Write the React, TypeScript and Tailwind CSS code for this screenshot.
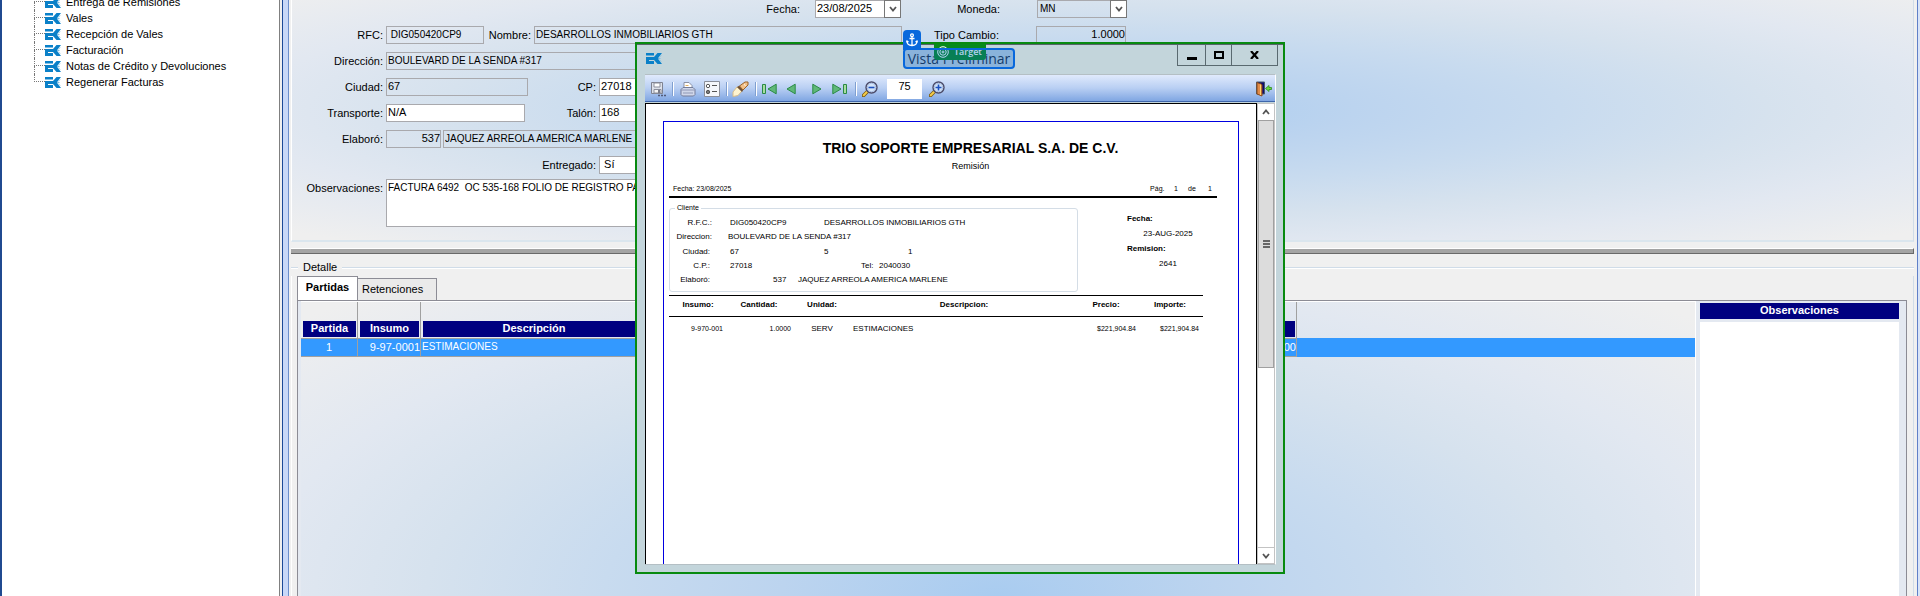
import React from "react";

const treeItems = [
  "Entrega de Remisiones",
  "Vales",
  "Recepción de Vales",
  "Facturación",
  "Notas de Crédito y Devoluciones",
  "Regenerar Facturas",
];

function EkLogo() {
  return (
    <svg width="16" height="11" viewBox="0 0 16 11" className="shrink-0" aria-hidden="true">
      <path d="M0 0h8v2.500H0zM0 4h8L11.500 0H16l-3.500 4.500v2L16 11h-4.500L8 7H3v1h5v3H0z" fill="#0a80c8" />
      <path d="M13 4.500L15 2.500M13 6.500l2 2M13 5.500h1.500" stroke="#7dc0e6" />
    </svg>
  );
}

function Chevron({ up = false }: { up?: boolean }) {
  return (
    <svg width="8" height="6" viewBox="0 0 8 6" aria-hidden="true">
      <path d={up ? "M1 5l3-3.500L7 5" : "M1 1l3 3.500L7 1"} fill="none" stroke="#555" strokeWidth="1.800" />
    </svg>
  );
}

function Label({ id, text, className }: { id: string; text: string; className: string }) {
  return (
    <label htmlFor={id} className={"shrink-0 pr-[3px] pb-px text-right whitespace-nowrap " + className}>
      {text}
    </label>
  );
}

function Field({ id, value, className }: { id: string; value: string; className: string }) {
  return (
    <input
      id={id}
      defaultValue={value}
      className={"h-[18px] shrink-0 rounded-none border border-[#a9a9ad] pb-[2px] pl-px outline-none " + className}
    />
  );
}

function Sidebar() {
  return (
    <nav className="flex w-[280px] shrink-0 flex-col border-r border-l-2 border-r-[#808080] border-l-[#204a90] bg-white pl-8">
      <ul className="-mt-[6px]">
        {treeItems.map((t, i) => (
          <li key={t} className="flex h-4 items-center">
            <span className="flex h-full w-[11px] flex-col">
              <span className="h-2 w-full border-b border-l border-dotted border-[#777]" />
              {i < treeItems.length - 1 && <span className="h-2 border-l border-dotted border-[#777]" />}
            </span>
            <EkLogo />
            <a href="#" className="pl-[5px] whitespace-nowrap">
              {t}
            </a>
          </li>
        ))}
      </ul>
    </nav>
  );
}

function Form() {
  return (
    <form className="flex h-[242px] shrink-0 flex-col gap-2 border-r border-b-2 border-l border-r-[#d0dce8] border-b-[#dbe6ee] border-l-white bg-[radial-gradient(ellipse_farthest-corner_at_50%_46%,#a9ccf0_0%,#bcd4ef_22%,#c8dbef_40%,#d6e2ee_58%,#e2e8f1_75%,#efefef_97%)]">
      <div className="flex h-[18px] items-center">
        <Label id="fecha" text="Fecha:" className="w-[511px]" />
        <div className="ml-[12px] flex">
          <Field id="fecha" value="23/08/2025" className="w-[69px] border-r-0 bg-white text-[11px]" />
          <button type="button" aria-label="Calendario" className="flex h-[18px] w-[17px] items-center justify-center border border-[#777] bg-white">
            <Chevron />
          </button>
        </div>
        <Label id="moneda" text="Moneda:" className="w-[102px]" />
        <div className="relative ml-[34px]">
          <select id="moneda" className="block h-[18px] w-[90px] appearance-none rounded-none border border-[#a9a9ad] bg-transparent pb-[2px] pl-[2px] text-[10px] outline-none">
            <option>MN</option>
          </select>
          <span className="pointer-events-none absolute top-0 right-0 flex h-[18px] w-[17px] items-center justify-center border border-[#777] bg-white">
            <Chevron />
          </span>
        </div>
      </div>
      <div className="flex h-[18px] items-center">
        <Label id="rfc" text="RFC:" className="w-[94px]" />
        <Field id="rfc" value=" DIG050420CP9" className="w-[98px] bg-transparent text-[10px]" />
        <Label id="nombre" text="Nombre:" className="w-[50px]" />
        <Field id="nombre" value="DESARROLLOS INMOBILIARIOS GTH" className="w-[368px] bg-transparent text-[10px]" />
        <Label id="cambio" text="Tipo Cambio:" className="w-[100px]" />
        <Field id="cambio" value="1.0000" className="ml-[34px] w-[90px] bg-transparent text-right text-[11px]" />
      </div>
      <div className="flex h-[18px] items-center">
        <Label id="direccion" text="Dirección:" className="w-[94px]" />
        <Field id="direccion" value="BOULEVARD DE LA SENDA #317" className="w-[516px] bg-transparent text-[10px]" />
      </div>
      <div className="flex h-[18px] items-center">
        <Label id="ciudad" text="Ciudad:" className="w-[94px]" />
        <Field id="ciudad" value="67" className="w-[142px] bg-transparent text-[11px]" />
        <Label id="cp" text="CP:" className="w-[71px]" />
        <Field id="cp" value="27018" className="w-[100px] bg-white text-[11px]" />
      </div>
      <div className="flex h-[18px] items-center">
        <Label id="transporte" text="Transporte:" className="w-[94px]" />
        <Field id="transporte" value="N/A" className="w-[139px] bg-white text-[11px]" />
        <Label id="talon" text="Talón:" className="w-[74px]" />
        <Field id="talon" value="168" className="w-[100px] bg-white text-[11px]" />
      </div>
      <div className="flex h-[18px] items-center">
        <Label id="elaboro" text="Elaboró:" className="w-[94px]" />
        <Field id="elaboro" value="537" className="mr-[2px] w-[55px] bg-transparent text-right text-[11px]" />
        <input
          aria-label="Nombre de quien elaboró"
          defaultValue="JAQUEZ ARREOLA AMERICA MARLENE"
          className="h-[18px] w-[459px] rounded-none border border-[#a9a9ad] bg-transparent pb-[2px] pl-px text-[10px] outline-none"
        />
      </div>
      <div className="flex h-[18px] items-center">
        <Label id="entregado" text="Entregado:" className="w-[307px]" />
        <Field id="entregado" value=" Sí" className="w-[100px] bg-white text-[11px]" />
      </div>
      <div className="-mt-[3px] flex items-start">
        <Label id="obs" text="Observaciones:" className="w-[94px] pt-px" />
        <textarea
          id="obs"
          defaultValue="FACTURA 6492  OC 535-168 FOLIO DE REGISTRO PATRONAL"
          className="h-[48px] w-[516px] resize-none rounded-none border border-[#a9a9ad] bg-white pt-px pl-px text-[10px] leading-[13px] outline-none"
        />
      </div>
    </form>
  );
}

function Detail() {
  const th = "border-r border-[#a0a0a0] p-0 align-bottom";
  const cap = "mr-px ml-[2px] mb-px block h-4 bg-[#000080] text-center font-bold leading-[15px] text-white";
  const td = "border-y border-r border-[#a0a0a0] bg-[#3399ff] pt-0 pb-px text-white";
  return (
    <section className="flex min-h-0 flex-1 flex-col">
      <div className="flex h-4 items-center">
        <span className="h-[2px] w-[7px] border-t border-[#d0dce8] bg-white" />
        <h2 className="px-[5px] pb-[2px]">Detalle</h2>
        <span className="h-[2px] flex-1 border-t border-[#d0dce8] bg-white" />
      </div>
      <div className="flex min-h-0 flex-1 flex-col border-x border-l-white border-r-[#d0dce8] pr-[6px] pl-[5px]">
        <div className="flex h-6 items-end" role="tablist">
          <button role="tab" aria-selected="true" className="-mb-px h-[25px] w-[61px] border border-b-0 border-[#8c8c95] bg-white pb-[4px] text-center font-bold">
            Partidas
          </button>
          <button role="tab" aria-selected="false" className="h-[22px] w-[79px] border border-b-0 border-l-0 border-[#8c8c95] bg-[#eaeaea] pb-px pl-1 text-left">
            Retenciones
          </button>
        </div>
        <div className="flex min-h-0 flex-1 border border-b-0 border-[#8c8c95] bg-[#e4e9f1] pl-[3px]">
          <div className="min-w-0 flex-1 border-t border-white bg-[radial-gradient(ellipse_farthest-corner_at_50%_100%,#a9ccf0_0%,#bcd4ef_22%,#c8dbef_40%,#d6e2ee_58%,#e2e8f1_75%,#efefef_97%)]">
            <table className="w-full table-fixed border-separate border-spacing-0">
              <colgroup>
                <col className="w-[57px]" />
                <col className="w-[63px]" />
                <col className="w-[226px]" />
                <col className="w-[650px]" />
                <col />
              </colgroup>
              <thead>
                <tr className="h-[36px]">
                  <th className={th}><span className={cap}>Partida</span></th>
                  <th className={th}><span className={cap}>Insumo</span></th>
                  <th className={th}><span className={cap}>Descripción</span></th>
                  <th className={th}><span className={cap}>Cantidad</span></th>
                  <th />
                </tr>
              </thead>
              <tbody>
                <tr className="h-[19px]">
                  <td className={td + " text-center"}>1</td>
                  <td className={td + " text-right"}>9-97-0001</td>
                  <td className={td + " pl-px text-[10px]"}>ESTIMACIONES</td>
                  <td className={td + " text-right"}>1.00</td>
                  <td className="bg-[#3399ff] p-0" />
                </tr>
              </tbody>
            </table>
          </div>
          <div className="flex w-[211px] flex-col border-l border-white pt-[2px] pr-[7px] pl-1">
            <label htmlFor="detalle-obs" className="mb-[3px] h-4 bg-[#000080] text-center leading-[15px] font-bold text-white">
              Observaciones
            </label>
            <textarea id="detalle-obs" className="w-full flex-1 resize-none bg-white outline-none" />
          </div>
        </div>
      </div>
    </section>
  );
}

const iconButton = "flex h-5 shrink-0 items-center justify-center";

function Separator() {
  return <span className="h-[14px] w-px shrink-0 bg-[#7f9fd0] shadow-[1px_0_0_#fff]" />;
}

function Arrow({ back = false, bar = false }: { back?: boolean; bar?: boolean }) {
  return (
    <svg width={bar ? 16 : 10} height="12" viewBox={bar ? "0 0 16 12" : "0 0 10 12"} aria-hidden="true">
      <g fill="#5fb878" stroke="#2a8a45" transform={back ? (bar ? "matrix(-1 0 0 1 16 0)" : "matrix(-1 0 0 1 10 0)") : undefined}>
        <path d="M.8 1.200L9 6 .8 10.800z" />
        {bar && <path d="M11.500 1.500h3v9h-3z" fill="#a8dca0" />}
      </g>
    </svg>
  );
}

function Magnifier({ plus = false }: { plus?: boolean }) {
  return (
    <svg width="16" height="16" viewBox="0 0 16 16" aria-hidden="true">
      <path d="M1.500 14.500l4.500-4.500" stroke="#7a5a10" strokeWidth="3.600" strokeLinecap="round" />
      <path d="M1.700 14.200l4-4" stroke="#f3cb4a" strokeWidth="2" strokeLinecap="round" />
      <circle cx="9.500" cy="6.500" r="5.500" fill="#d5e6fa" stroke="#4a4a68" strokeWidth="1.400" />
      <circle cx="9.500" cy="6.500" r="4.200" fill="none" stroke="#a9bde0" />
      <path d={plus ? "M6.500 6.500h6M9.500 3.500v6" : "M6.500 6.500h6"} stroke="#1c50c0" strokeWidth="1.600" />
    </svg>
  );
}

function Toolbar() {
  return (
    <div className="flex h-[27px] shrink-0 items-center border-b border-[#3f66ab] bg-gradient-to-b from-[#e0eafc] via-[#b9cff3] to-[#80a6e2] pt-px pl-[5px]">
      <button aria-label="Guardar" className={iconButton + " mr-[4px] w-[18px]"}>
        <svg width="18" height="16" viewBox="0 0 18 16">
          <path d="M1.500 1.500h11v11h-11z" fill="#dde1ea" stroke="#7f8290" />
          <path d="M4 2h6v4H4z" fill="#fff" stroke="#8c8f9c" />
          <path d="M4 8.500h7V12H4z" fill="#f5f5f5" stroke="#8c8f9c" />
          <path d="M8 9h2v3H8z" fill="#777a88" />
          <path d="M8 14.500h2M11 14.500h2M14 14.500h2" stroke="#505a78" strokeWidth="1.500" />
        </svg>
      </button>
      <Separator />
      <button aria-label="Imprimir" className={iconButton + " ml-[7px] w-4"}>
        <svg width="16" height="16" viewBox="0 0 16 16">
          <path d="M4 7V1.500h5l3 3V7" fill="#fff" stroke="#8a91a5" />
          <path d="M5.500 4.500h3M5.500 6.500h5" stroke="#e0b060" />
          <path d="M1 8.500l2-2h10l2 2v5l-1.500 1.500h-11L1 13.500z" fill="#d0d7ea" stroke="#747d9a" />
          <path d="M1 9h14M3 12h10" stroke="#8f98b5" />
        </svg>
      </button>
      <button aria-label="Opciones" className={iconButton + " mr-[6px] ml-[8px] w-4"}>
        <svg width="16" height="16" viewBox="0 0 16 16">
          <path d="M.5.5h15v15H.5z" fill="#f5f7fb" stroke="#8b8f9a" />
          <circle cx="4" cy="5" r="1.700" fill="#fff" stroke="#555" />
          <circle cx="4" cy="11" r="1.700" fill="#777" stroke="#555" />
          <path d="M8 4.500h5M8 10.500h5" stroke="#555" />
        </svg>
      </button>
      <Separator />
      <button aria-label="Buscar" className={iconButton + " mr-[6px] ml-[5px] w-[17px]"}>
        <svg width="17" height="16" viewBox="0 0 17 16">
          <path d="M1 11l4-5 5 4-4 4.500-5 1z" fill="#fff4d0" stroke="#d8bd8a" />
          <path d="M5 6l2.500-1.500 4 4L10 11z" fill="#6f5136" />
          <path d="M7.500 5L13 1h3v3l-5 5z" fill="#f2c088" stroke="#9a6228" />
          <path d="M12 3.500l1.500 1" stroke="#fff" />
        </svg>
      </button>
      <Separator />
      <button aria-label="Primera página" className={iconButton + " ml-[5px] w-4"}><Arrow back bar /></button>
      <button aria-label="Página anterior" className={iconButton + " ml-[9px] w-[10px]"}><Arrow back /></button>
      <button aria-label="Página siguiente" className={iconButton + " ml-4 w-[10px]"}><Arrow /></button>
      <button aria-label="Última página" className={iconButton + " mr-[7px] ml-[10px] w-4"}><Arrow bar /></button>
      <Separator />
      <button aria-label="Alejar" className={iconButton + " ml-[6px] w-4"}><Magnifier /></button>
      <input aria-label="Zoom" defaultValue="75" className="mr-[7px] ml-[9px] h-5 w-[35px] shrink-0 bg-white pb-[6px] text-center text-[11px] outline-none" />
      <button aria-label="Acercar" className={iconButton + " w-4"}><Magnifier plus /></button>
      <button aria-label="Salir" className={iconButton + " mr-[3px] ml-auto w-4"}>
        <svg width="16" height="16" viewBox="0 0 16 16">
          <path d="M.5 1h8v12h-8z" fill="#0a0a70" stroke="#4b5a6a" />
          <path d="M1 1.500l5 2V15l-5-2z" fill="#e08a48" stroke="#8a4a1c" />
          <path d="M4.500 3.500V14" stroke="#ffd66a" />
          <path d="M9.500 7.500L13 4.500v2h2.500v2H13v2z" fill="#6cdb3c" stroke="#2f8a20" strokeWidth=".8" />
        </svg>
      </button>
    </div>
  );
}

function Report() {
  const lab = "w-[42px] text-right";
  return (
    <div className="min-w-0 flex-1 overflow-hidden border border-b-0 border-black bg-white pt-[17px] pr-[17px] pl-[17px] text-[8px] leading-[14px]">
      <article className="h-full border border-b-0 border-[#0000e0] pt-[16px] pr-[21px] pl-[5px]">
        <header className="-mr-[9px] pl-[46px] text-center">
          <h1 className="h-[21px] text-[14px] leading-[20px] font-bold">TRIO SOPORTE EMPRESARIAL S.A. DE C.V.</h1>
          <p className="text-[9px]">Remisión</p>
        </header>
        <div className="mt-[9px] flex justify-between border-b-2 border-black pr-[5px] pl-1 text-[7px]">
          <span>Fecha: 23/08/2025</span>
          <span className="flex">
            <span className="w-6">Pág.</span>
            <span className="w-[14px]">1</span>
            <span className="w-5">de</span>
            <span>1</span>
          </span>
        </div>
        <div className="flex items-start pt-[3px]">
          <fieldset className="h-[91px] w-[409px] rounded-[3px] border border-[#d4dde6] pt-px">
            <legend className="ml-[5px] px-[2px] text-[7px]">Cliente</legend>
            <div className="grid grid-cols-[60px_94px_1fr]">
              <span className={lab}>R.F.C.:</span><span>DIG050420CP9</span><span>DESARROLLOS INMOBILIARIOS GTH</span>
            </div>
            <div className="grid grid-cols-[58px_1fr]">
              <span className={lab}>Direccion:</span><span>BOULEVARD DE LA SENDA #317</span>
            </div>
            <div className="grid grid-cols-[60px_94px_84px_1fr] pt-px">
              <span className={lab + " pr-[2px]"}>Ciudad:</span><span>67</span><span>5</span><span>1</span>
            </div>
            <div className="grid grid-cols-[60px_131px_18px_1fr]">
              <span className={lab + " pr-[2px]"}>C.P.:</span><span>27018</span><span>Tel:</span><span>2040030</span>
            </div>
            <div className="grid grid-cols-[103px_25px_1fr]">
              <span className={lab + " pr-[2px]"}>Elaboró:</span><span>537</span><span>JAQUEZ ARREOLA AMERICA MARLENE</span>
            </div>
          </fieldset>
          <dl className="ml-[49px] w-[82px] pt-[10px] leading-[15px]">
            <dt className="font-bold">Fecha:</dt>
            <dd className="text-center">23-AUG-2025</dd>
            <dt className="font-bold">Remision:</dt>
            <dd className="text-center">2641</dd>
          </dl>
        </div>
        <table className="mt-[3px] w-[534px] table-fixed border-collapse leading-[10px]">
          <colgroup>
            <col className="w-[58px]" />
            <col className="w-[64px]" />
            <col className="w-[62px]" />
            <col className="w-[222px]" />
            <col className="w-[62px]" />
            <col className="w-[66px]" />
          </colgroup>
          <thead>
            <tr className="h-[21px] border-y border-black">
              <th className="p-0 pb-[2px]">Insumo:</th>
              <th className="p-0 pb-[2px]">Cantidad:</th>
              <th className="p-0 pb-[2px]">Unidad:</th>
              <th className="p-0 pb-[2px]">Descripcion:</th>
              <th className="p-0 pb-[2px]">Precio:</th>
              <th className="p-0 pb-[2px]">Importe:</th>
            </tr>
          </thead>
          <tbody>
            <tr className="h-[25px]">
              <td className="p-0 pr-1 text-right text-[7px]">9-970-001</td>
              <td className="p-0 text-right text-[7px]">1.0000</td>
              <td className="p-0 text-center">SERV</td>
              <td className="p-0">ESTIMACIONES</td>
              <td className="p-0 pr-px text-right text-[7px]">$221,904.84</td>
              <td className="p-0 pr-1 text-right text-[7px]">$221,904.84</td>
            </tr>
          </tbody>
        </table>
      </article>
    </div>
  );
}

function Scrollbar() {
  return (
    <div className="flex w-[18px] shrink-0 flex-col border-x border-[#c3c3c3] bg-white">
      <button aria-label="Subir" className="flex h-[17px] items-center justify-center border-t border-[#c3c3c3]"><Chevron up /></button>
      <div className="flex h-[248px] flex-col items-center justify-center gap-px border border-[#a0a0a0] bg-[#dcdcdc]">
        <span className="h-[2px] w-[7px] bg-[#666]" />
        <span className="h-[2px] w-[7px] bg-[#666]" />
        <span className="h-[2px] w-[7px] bg-[#666]" />
      </div>
      <button aria-label="Bajar" className="mt-auto flex h-[17px] items-center justify-center border-y border-[#c3c3c3]"><Chevron /></button>
    </div>
  );
}

function PreviewWindow() {
  return (
    <div role="dialog" aria-label="Vista Preliminar" className="absolute top-[42px] left-[635px] flex h-[532px] w-[650px] flex-col border-2 border-[#088a10] bg-[#c3d5db]">
      <header className="relative flex h-[30px] shrink-0 items-start justify-between border-t border-[#566468] pl-[9px]">
        <div className="pt-[8px]"><EkLogo /></div>
        <div className="mr-[5px] flex h-[21px] border border-t-0 border-[#5a6a70]">
          <button aria-label="Minimizar" className="flex w-[27px] items-center justify-center">
            <svg width="10" height="12" viewBox="0 0 10 12"><path d="M0 8h10v3H0z" /></svg>
          </button>
          <button aria-label="Maximizar" className="flex w-[27px] items-center justify-center border-x border-[#5a6a70]">
            <svg width="10" height="8" viewBox="0 0 10 8"><path d="M1 1h8v6H1z" fill="none" stroke="#000" strokeWidth="2" /></svg>
          </button>
          <button aria-label="Cerrar" className="flex w-[45px] items-center justify-center">
            <svg width="9" height="8" viewBox="0 0 9 8"><path d="M1 0l7 8M8 0L1 8" stroke="#000" strokeWidth="2.200" /></svg>
          </button>
        </div>
        <span className="absolute top-[3px] left-[266px] flex h-[21px] w-[112px] items-center justify-center pt-px text-[14px] whitespace-nowrap text-[#1a2a3a] [font-family:'Open_Sans','Noto_Sans',sans-serif]">
          Vista Preliminar
        </span>
        <span className="absolute -top-[1px] left-[297px] flex h-4 w-[52px] items-center gap-[5px] rounded-b-[3px] bg-[#088a1c] pl-[3px] text-[9px] font-semibold text-white [font-family:'Open_Sans',sans-serif]">
          <svg width="12" height="12" viewBox="0 0 12 12" fill="none" stroke="#fff">
            <circle cx="6" cy="6" r="5.300" /><circle cx="6" cy="6" r="3.200" /><circle cx="6" cy="6" r="1" />
          </svg>
          <span>Target</span>
        </span>
        <span className="absolute top-[3px] left-[266px] h-[21px] w-[112px] rounded-[4px] border-2 border-[#0868dc] bg-[#0868dc]/30" />
        <span className="absolute -top-[15px] left-[266px] flex h-5 w-[18px] items-center justify-center rounded-t-[4px] bg-[#0868dc]">
          <svg width="12" height="14" viewBox="0 0 12 14" fill="none" stroke="#fff" strokeWidth="1.300">
            <circle cx="6" cy="2.300" r="1.400" /><path d="M6 4v9M3.500 5.500h5M1 8c0 3 2 4.500 5 4.500S11 11 11 8M.5 9.500L1 8l1.500 1M11.500 9.500L11 8 9.500 9" />
          </svg>
        </span>
      </header>
      <div className="mr-[7px] mb-[7px] ml-[8px] flex min-h-0 flex-1 flex-col border-t border-r border-b border-[#b4bfc4] border-r-white">
        <Toolbar />
        <div className="mt-px flex min-h-0 flex-1">
          <Report />
          <Scrollbar />
        </div>
      </div>
    </div>
  );
}

export default function App() {
  return (
    <div className="relative flex h-screen overflow-hidden bg-[#f0f0f0] font-['Liberation_Sans',Arial,sans-serif] text-[11px] leading-4 text-black">
      <Sidebar />
      <div className="ml-[2px] w-[7px] shrink-0 border-x border-l-[#1c4a98] border-r-[#6d8fcb] bg-[#c8d8f8]" />
      <main className="flex min-w-0 flex-1 flex-col border-r border-[#6080c8] pr-[3px] pl-[2px]">
        <Form />
        <div className="my-[6px] h-[6px] shrink-0 border-t border-r border-b border-t-white border-r-[#696969] border-b-[#696969] bg-[#a4a4a4]" />
        <Detail />
      </main>
      <div className="w-[2px] shrink-0 bg-[#d8e4f8]" />
      <PreviewWindow />
    </div>
  );
}
